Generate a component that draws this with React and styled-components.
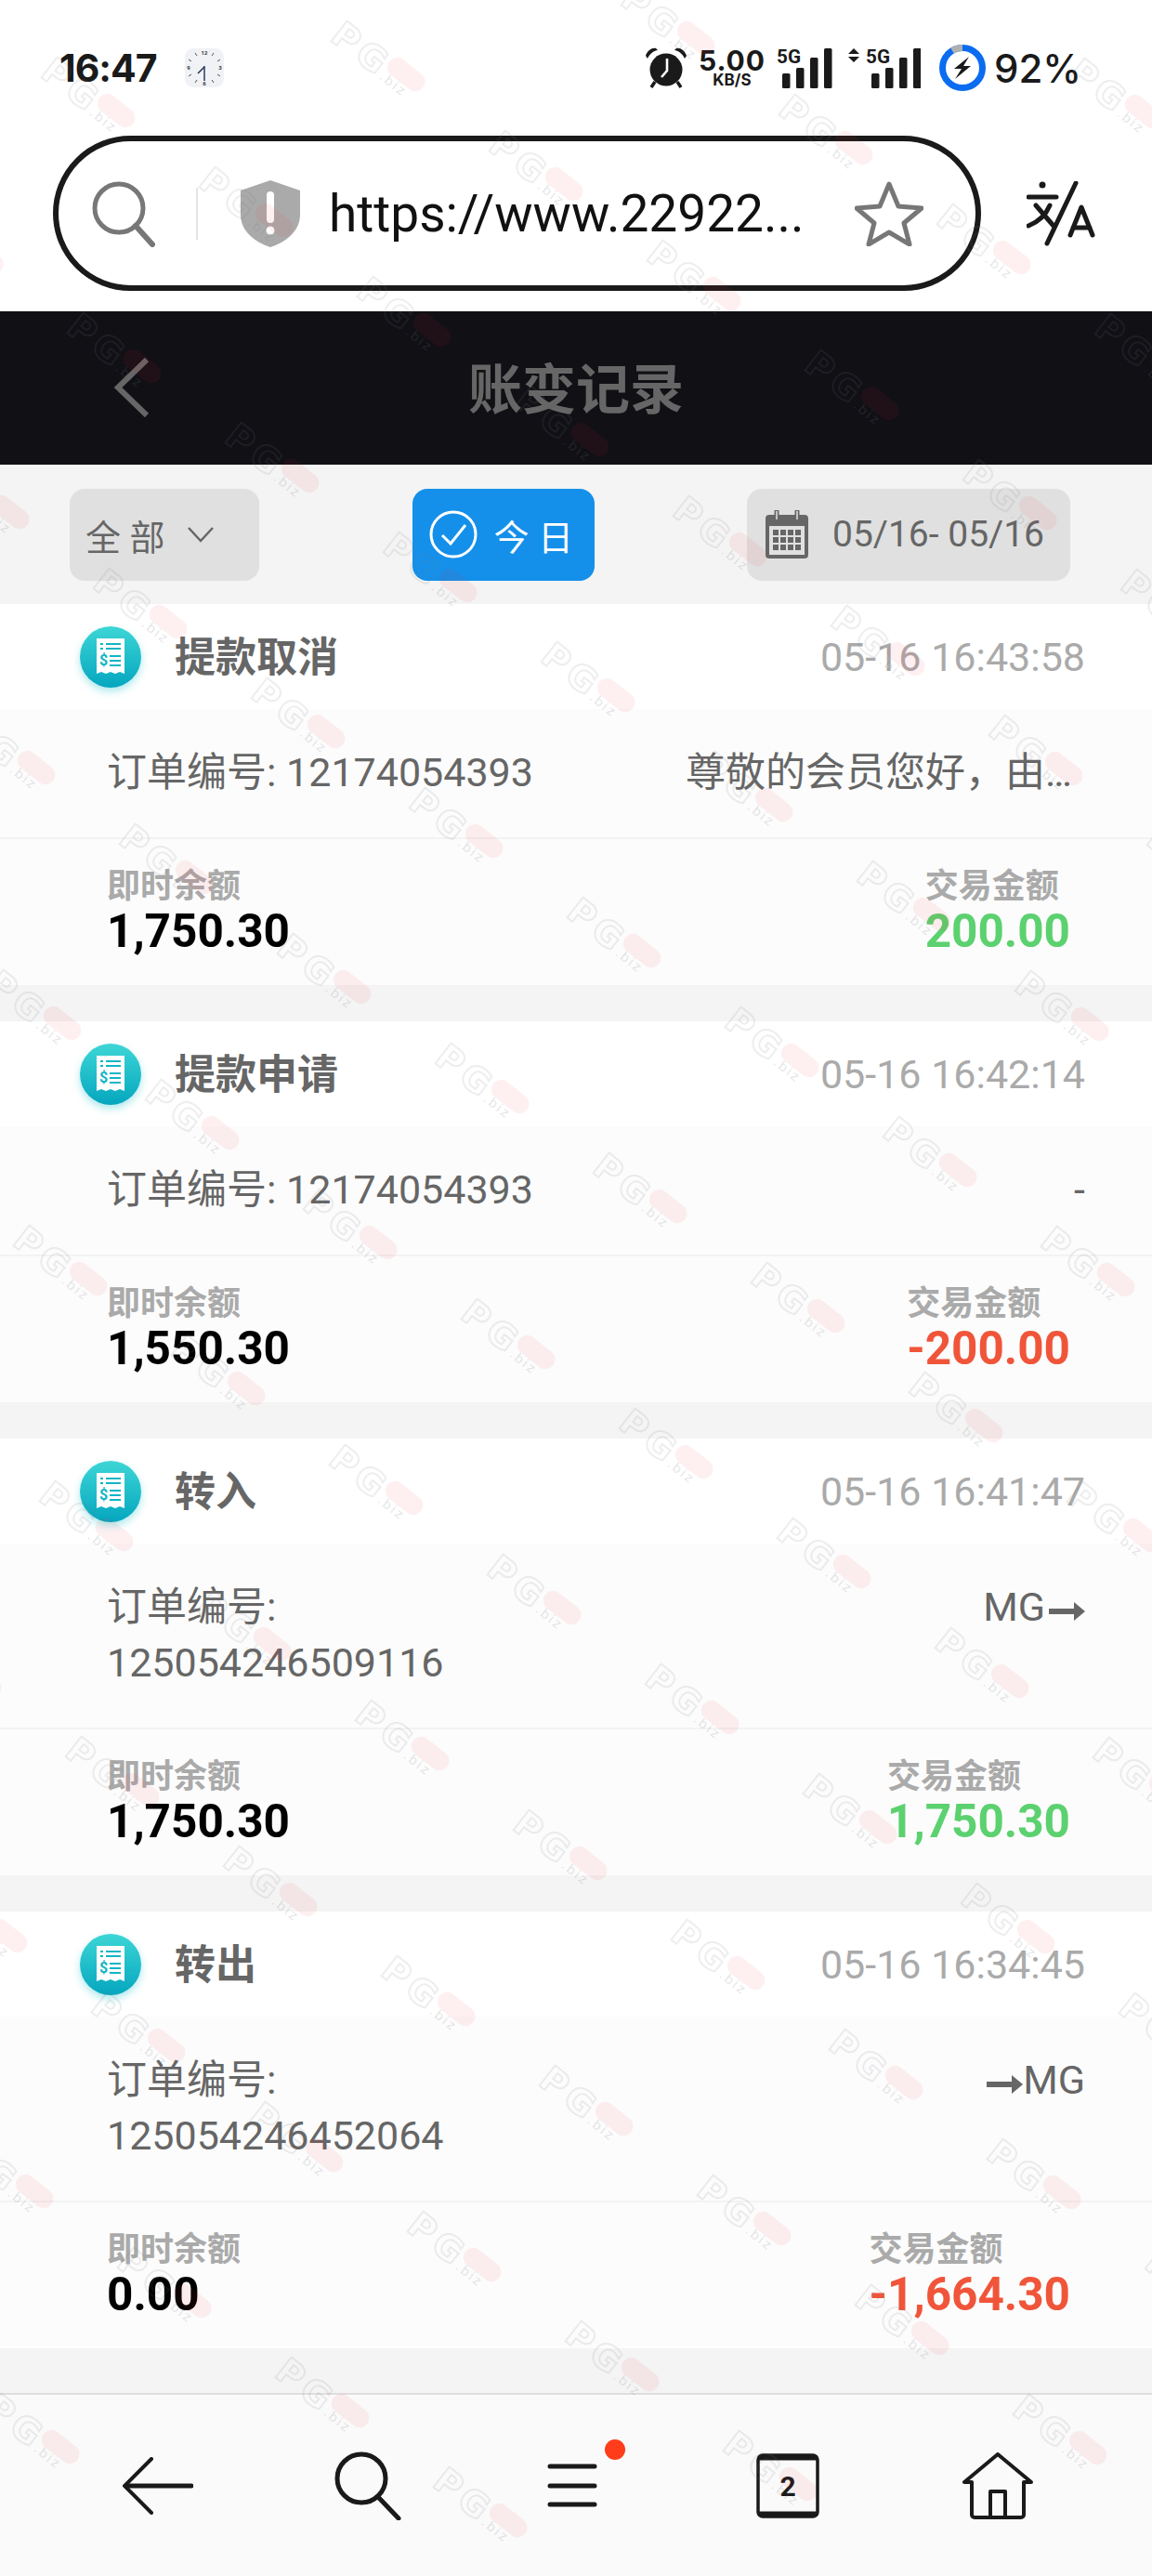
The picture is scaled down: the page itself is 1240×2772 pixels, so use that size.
import React from 'react';
import styled, { createGlobalStyle } from 'styled-components';

const GlobalStyle = createGlobalStyle`
  html, body { margin: 0; padding: 0; background: #fff; }
  * { box-sizing: border-box; }
  body { font-family: Roboto, "Noto Sans CJK SC", sans-serif; }
`;

const Page = styled.div`
  position: relative;
  width: 1240px;
  height: 2772px;
  overflow: hidden;
  display: flex;
  flex-direction: column;
  background: #f4f4f4;
`;

/* status bar */
const StatusBar = styled.div`
  height: 146px;
  background: #fff;
  padding: 0 76px 0 64px;
  display: flex;
  align-items: center;
  color: #1a1a1a;
  font-family: Inter, Roboto, sans-serif;
`;
const Time = styled.div`
  font-size: 41px;
  font-weight: 700;
  letter-spacing: -1px;
  width: 135px;
`;
const StatusRight = styled.div`
  margin-left: auto;
  display: flex;
  align-items: center;
`;
const Speed = styled.div`
  width: 76px;
  margin: 0 10px;
  display: flex;
  flex-direction: column;
  align-items: center;
`;
const SpeedValue = styled.span`
  font-size: 30px;
  font-weight: 700;
  letter-spacing: 1px;
  line-height: 27px;
`;
const SpeedUnit = styled.span`
  font-size: 17px;
  font-weight: 700;
  line-height: 15px;
`;
const SignalSlot = styled.div`
  margin-left: ${(p) => p.$ml}px;
  line-height: 0;
`;
const Battery = styled.div`
  font-size: 42px;
  font-weight: 500;
  margin-left: 9px;
`;

/* address bar */
const BrowserBar = styled.div`
  height: 189px;
  background: #fff;
  display: flex;
  align-items: flex-start;
  padding-left: 57px;
`;
const Pill = styled.div`
  width: 999px;
  height: 167px;
  border: 6px solid #1a1a1a;
  border-radius: 84px;
  display: flex;
  align-items: center;
  padding: 0 56px 0 35px;
`;
const Divider = styled.div`
  width: 2px;
  height: 56px;
  background: #e4e4e4;
  margin: 0 46px 0 43px;
`;
const Url = styled.div`
  flex: 1;
  margin-left: 31px;
  font-size: 55px;
  color: #111;
  white-space: nowrap;
`;
const Translate = styled.div`
  margin-left: 49px;
  margin-top: 49px;
  line-height: 0;
`;

/* page header */
const Header = styled.div`
  height: 165px;
  background: #101015;
  display: flex;
  align-items: center;
  justify-content: center;
  position: relative;
`;
const BackLink = styled.div`
  position: absolute;
  left: 122px;
  top: 50px;
  line-height: 0;
`;
const Title = styled.div`
  font-size: 58px;
  font-weight: 700;
  color: #666;
  margin-bottom: 6px;
`;

/* filters */
const Filters = styled.div`
  height: 150px;
  display: flex;
  align-items: center;
  justify-content: space-between;
  padding: 0 88px 0 75px;
  flex: none;
`;
const FilterButton = styled.div`
  height: 99px;
  width: ${(p) => p.$w}px;
  border-radius: 16px;
  display: flex;
  align-items: center;
  background: ${(p) => (p.$active ? '#1490ea' : '#e0e0e0')};
  color: ${(p) => (p.$active ? '#fff' : '#666')};
  padding-left: ${(p) => p.$pl}px;
  white-space: nowrap;
`;
const FilterText = styled.span`
  margin: 0 ${(p) => p.$mr || 0}px 0 ${(p) => p.$ml || 0}px;
  font-size: ${(p) => p.$size || 38}px;
`;

/* records */
const List = styled.div`
  flex: 1;
  overflow: hidden;
`;
const Card = styled.div`
  margin-bottom: 39px;
  background: #fcfcfc;
`;
const CardHead = styled.div`
  height: 113px;
  background: #fff;
  display: flex;
  align-items: center;
  padding: 0 72px 0 86px;
`;
const IconBall = styled.div`
  width: 66px;
  height: 66px;
  border-radius: 50%;
  background: linear-gradient(180deg, #3dd6d6, #05a6bf);
  box-shadow: 0 4px 8px rgba(20, 190, 200, 0.35);
  display: flex;
  align-items: center;
  justify-content: center;
`;
const CardTitle = styled.div`
  margin: 0 0 5px 36px;
  font-size: 44px;
  font-weight: 700;
  color: #666;
`;
const CardTime = styled.div`
  margin-left: auto;
  font-size: 43px;
  color: #aaa;
`;
const InfoRow = styled.div`
  display: flex;
  padding: 38px 72px 40px 115px;
  font-size: 43px;
  line-height: 60px;
  color: #666;
  border-bottom: 2px solid #f3f3f3;
`;
const OrderNo = styled.div`
  width: 500px;
`;
const Note = styled.div`
  margin-left: auto;
  width: 430px;
  text-align: right;
  white-space: nowrap;
  overflow: hidden;
  text-overflow: ellipsis;
`;
const ArrowGap = styled.span`
  margin-left: 4px;
`;
const AmountRow = styled.div`
  height: 157px;
  display: flex;
  justify-content: space-between;
  align-items: center;
  padding: 0 88px 3px 115px;
`;
const AmountCol = styled.div`
  display: flex;
  flex-direction: column;
`;
const AmountLabel = styled.span`
  font-size: 36px;
  font-weight: 700;
  color: #aaa;
  line-height: 44px;
`;
const AmountValue = styled.span`
  font-size: 49.5px;
  font-weight: 700;
  line-height: 52px;
  color: ${(p) => p.$color || '#000'};
`;

/* bottom bar */
const BottomBar = styled.div`
  flex: none;
  height: 197px;
  background: #fafafa;
  border-top: 2px solid #dedede;
  display: grid;
  grid-template-columns: repeat(5, 226px);
  padding-left: 57px;
`;
const BottomItem = styled.div`
  display: flex;
  align-items: center;
  justify-content: center;
`;

/* tiled watermark over the whole page */
const Mark = styled.div`
  position: absolute;
  width: 130px;
  height: 44px;
  transform: rotate(38deg);
  pointer-events: none;
  font-family: "DejaVu Sans", sans-serif;
`;
const MarkPG = styled.span`
  position: absolute;
  left: 0;
  top: 0;
  font-size: 38px;
  line-height: 44px;
  font-weight: 700;
  letter-spacing: 5px;
  color: transparent;
  -webkit-text-stroke: 2px rgba(120, 120, 125, 0.14);
`;
const MarkPill = styled.span`
  position: absolute;
  left: 66px;
  top: 3px;
  width: 46px;
  height: 21px;
  border-radius: 11px;
  background: rgba(240, 40, 50, 0.07);
`;
const MarkBiz = styled.span`
  position: absolute;
  left: 68px;
  top: 22px;
  font-size: 14px;
  letter-spacing: 2px;
  color: rgba(120, 120, 125, 0.2);
`;

const WatermarkLayer = () => {
  const marks = [];
  for (let i = -10; i < 24; i++) {
    for (let j = -10; j < 22; j++) {
      const x = 234 + i * 170 - j * 142;
      const y = 482 + i * 118 + j * 157;
      if (x > -130 && x < 1240 && y > -20 && y < 2700) marks.push([x, y]);
    }
  }
  return marks.map(([x, y]) => (
    <Mark key={`${x}-${y}`} style={{ left: x, top: y }}>
      <MarkPG>PG</MarkPG>
      <MarkPill />
      <MarkBiz>.biz</MarkBiz>
    </Mark>
  ));
};

const ClockIcon = () => (
  <svg width="42" height="42" viewBox="0 0 42 42">
    <rect x="0" y="0" width="42" height="42" rx="9" fill="#f0f2f6" />
    <path d="M11 5l2 3M31 5l-2 3M4 12l3 2M38 12l-3 2M4 30l3-2M38 30l-3-2M11 37l2-3M31 37l-2-3" stroke="#555" strokeWidth="1" />
    <g fontFamily="Roboto, sans-serif" fontSize="6" fontWeight="700" fill="#333" textAnchor="middle">
      <text x="21" y="7">12</text>
      <text x="38" y="23">3</text>
      <text x="21" y="40">6</text>
      <text x="4" y="23">9</text>
    </g>
    <path d="M21 19v16" stroke="#5a6a8a" strokeWidth="2" />
    <path d="M21 20l-7 7" stroke="#2a3a55" strokeWidth="1.6" />
  </svg>
);

const AlarmIcon = () => (
  <svg width="46" height="46" viewBox="0 0 46 46">
    <circle cx="23" cy="25" r="17.5" fill="#1a1a1a" />
    <path d="M1 10C3 4 8 1 12 2L14 4C8 5 5 9 3 13ZM45 10C43 4 38 1 34 2L32 4C38 5 41 9 43 13Z" fill="#1a1a1a" />
    <path d="M11 38l-4 6M35 38l4 6" stroke="#1a1a1a" strokeWidth="3.5" />
    <path d="M24 13v13l-6 7" stroke="#fff" strokeWidth="2.6" fill="none" />
  </svg>
);

const SignalIcon = ({ arrows }) => {
  const w = arrows ? 78 : 60;
  const dx = arrows ? 19 : 0;
  return (
    <svg width={w} height="44" viewBox={`0 0 ${w} 44`}>
      {arrows && <path d="M6 1l6 6H0ZM6 16l6-6H0Z" fill="#1a1a1a" />}
      <text x={dx} y="17" fontFamily="Roboto, sans-serif" fontSize="21" fontWeight="700" fill="#1a1a1a" textLength="26" lengthAdjust="spacingAndGlyphs">5G</text>
      <rect x={dx + 6} y="28" width="8.5" height="16" rx="1.5" fill="#1a1a1a" />
      <rect x={dx + 21} y="22" width="8.5" height="22" rx="1.5" fill="#1a1a1a" />
      <rect x={dx + 36} y="11" width="8.5" height="33" rx="1.5" fill="#1a1a1a" />
      <rect x={dx + 51} y="1" width="8.5" height="43" rx="1.5" fill="#1a1a1a" />
    </svg>
  );
};

const ChargeIcon = () => (
  <svg width="50" height="50" viewBox="0 0 50 50">
    <circle cx="25" cy="25" r="21.5" fill="none" stroke="#0b6cf0" strokeWidth="7" />
    <path d="M25 3.5a21.5 21.5 0 0 0-11 3" fill="none" stroke="#b0b0b0" strokeWidth="7" />
    <path d="M32 13L16 26h8l-7 11 17-14h-8z" fill="#1a1a1a" />
  </svg>
);

const SearchGlass = () => (
  <svg width="70" height="72" viewBox="0 0 70 72" fill="none">
    <circle cx="30" cy="30" r="26" stroke="#777" strokeWidth="5" />
    <path d="M48 49l18 20" stroke="#777" strokeWidth="6" strokeLinecap="round" />
  </svg>
);

const ShieldIcon = () => (
  <svg width="64" height="72" viewBox="0 0 64 72">
    <path d="M32 0l32 11v26c0 17-14 29-32 35C14 66 0 54 0 37V11z" fill="#aaa" />
    <path d="M32 16v26" stroke="#fff" strokeWidth="8" strokeLinecap="round" />
    <circle cx="32" cy="54" r="4.5" fill="#fff" />
  </svg>
);

const StarIcon = () => (
  <svg width="74" height="70" viewBox="0 0 74 70" fill="none">
    <path d="M37 3l10 24 25 2-19 16 6 23-22-13-22 13 6-23L2 29l25-2z" stroke="#777" strokeWidth="5" strokeLinejoin="round" />
  </svg>
);

const TranslateIcon = () => (
  <svg width="74" height="70" viewBox="0 0 74 70" fill="none" stroke="#1a1a1a" strokeWidth="5" strokeLinecap="round" strokeLinejoin="round">
    <circle cx="17" cy="4" r="3.5" fill="#1a1a1a" stroke="none" />
    <path d="M2 17h30M10 26l19 22M25 26C20 38 12 44 2 48" />
    <path d="M53 2L22 67" />
    <path d="M47 58l12-30 12 30M50 50h18" />
  </svg>
);

const ChevronLeft = () => (
  <svg width="40" height="64" viewBox="0 0 40 64" fill="none">
    <path d="M36 2L5 32l31 30" stroke="#666" strokeWidth="6" />
  </svg>
);

const ChevronDown = () => (
  <svg width="30" height="20" viewBox="0 0 30 20" fill="none">
    <path d="M2 3l13 14L28 3" stroke="#666" strokeWidth="2.5" />
  </svg>
);

const CheckCircle = () => (
  <svg width="52" height="52" viewBox="0 0 52 52" fill="none">
    <circle cx="26" cy="26" r="24" stroke="#fff" strokeWidth="3" />
    <path d="M14 27l9 9 16-20" stroke="#fff" strokeWidth="3" />
  </svg>
);

const CalendarIcon = () => (
  <svg width="46" height="52" viewBox="0 0 46 52">
    <path d="M4 5h38a4 4 0 0 1 4 4v39a4 4 0 0 1-4 4H4a4 4 0 0 1-4-4V9a4 4 0 0 1 4-4z" fill="#666" />
    <rect x="4" y="17" width="38" height="31" fill="#e0e0e0" />
    <path d="M12 1v9M34 1v9" stroke="#666" strokeWidth="5" strokeLinecap="round" />
    <path d="M12 1v9M34 1v9" stroke="#e0e0e0" strokeWidth="1.5" />
    {[21, 29, 37].map((y) =>
      [8, 16, 24, 32].map((x) => <rect key={`${x}-${y}`} x={x} y={y} width="6" height="6" fill="#666" />)
    )}
  </svg>
);

const ReceiptIcon = () => (
  <svg width="32" height="42" viewBox="0 0 32 42">
    <path d="M1 1h30v38l-5-2-5 2-5-2-5 2-5-2-5 2z" fill="#fff" />
    <path d="M5 7h3M11 7h16M5 12h3M11 12h16" stroke="#12b5c4" strokeWidth="2" />
    <text x="4" y="30" fontFamily="Roboto, sans-serif" fontSize="16" fontWeight="700" fill="#12b5c4">$</text>
    <path d="M15 20h12M15 25h12M15 30h12" stroke="#12b5c4" strokeWidth="2" />
  </svg>
);

const TransferArrow = () => (
  <svg width="39" height="20" viewBox="0 0 39 20">
    <path d="M0 7h27V0l12 10-12 10v-7H0z" fill="#666" />
  </svg>
);

const NavBack = () => (
  <svg width="76" height="62" viewBox="0 0 76 62" fill="none" stroke="#1a1a1a" strokeLinecap="round">
    <path d="M31 2L2 31l29 29" strokeWidth="4" />
    <path d="M4 31h70" strokeWidth="5" />
  </svg>
);

const NavSearch = () => (
  <svg width="72" height="74" viewBox="0 0 72 74" fill="none" stroke="#1a1a1a" strokeLinecap="round">
    <circle cx="29" cy="29" r="26" strokeWidth="5" />
    <path d="M47 49l22 23" strokeWidth="5" />
  </svg>
);

const NavMenu = () => (
  <svg width="108" height="100" viewBox="0 0 108 100" fill="none" stroke="#1a1a1a" strokeLinecap="round">
    <path d="M24 29h48M24 50h48M24 70h48" strokeWidth="5" />
    <circle cx="94" cy="11" r="11" fill="#ff3d1a" stroke="none" />
  </svg>
);

const NavTabs = () => (
  <svg width="68" height="70" viewBox="0 0 68 70">
    <rect x="2" y="2" width="64" height="66" rx="5" fill="none" stroke="#1a1a1a" strokeWidth="3.5" />
    <path d="M2 5h64" stroke="#1a1a1a" strokeWidth="5" />
    <path d="M2 65h64" stroke="#1a1a1a" strokeWidth="5" />
    <text x="34" y="46" textAnchor="middle" fontFamily="Roboto, sans-serif" fontSize="30" fontWeight="700" fill="#1a1a1a">2</text>
  </svg>
);

const NavHome = () => (
  <svg width="76" height="72" viewBox="0 0 76 72" fill="none" stroke="#1a1a1a" strokeWidth="4" strokeLinejoin="round">
    <path d="M38 2L2 32h8v35a3 3 0 0 0 3 3h50a3 3 0 0 0 3-3V32h8z" />
    <path d="M30 70V42h16v28" />
  </svg>
);

const records = [
  { title: '提款取消', time: '05-16 16:43:58', order: '订单编号: 12174054393', note: '尊敬的会员您好，由于您的提款申请未通过', balance: '1,750.30', amount: '200.00', color: '#5cd16f' },
  { title: '提款申请', time: '05-16 16:42:14', order: '订单编号: 12174054393', note: '-', balance: '1,550.30', amount: '-200.00', color: '#f0553a' },
  { title: '转入', time: '05-16 16:41:47', order: '订单编号: 125054246509116', note: <>MG<ArrowGap><TransferArrow /></ArrowGap></>, balance: '1,750.30', amount: '1,750.30', color: '#5cd16f' },
  { title: '转出', time: '05-16 16:34:45', order: '订单编号: 125054246452064', note: <><TransferArrow />MG</>, balance: '0.00', amount: '-1,664.30', color: '#f0553a' },
];

const App = () => (
  <Page>
    <GlobalStyle />
    <StatusBar>
      <Time>16:47</Time>
      <ClockIcon />
      <StatusRight>
        <AlarmIcon />
        <Speed>
          <SpeedValue>5.00</SpeedValue>
          <SpeedUnit>KB/S</SpeedUnit>
        </Speed>
        <SignalSlot $ml={0}><SignalIcon /></SignalSlot>
        <SignalSlot $ml={17}><SignalIcon arrows /></SignalSlot>
        <SignalSlot $ml={20}><ChargeIcon /></SignalSlot>
        <Battery>92%</Battery>
      </StatusRight>
    </StatusBar>
    <BrowserBar>
      <Pill>
        <SearchGlass />
        <Divider />
        <ShieldIcon />
        <Url>https://www.22922...</Url>
        <StarIcon />
      </Pill>
      <Translate>
        <TranslateIcon />
      </Translate>
    </BrowserBar>
    <Header>
      <BackLink>
        <ChevronLeft />
      </BackLink>
      <Title>账变记录</Title>
    </Header>
    <Filters>
      <FilterButton $w={204} $pl={17}>
        <FilterText $mr={24}>全 部</FilterText>
        <ChevronDown />
      </FilterButton>
      <FilterButton $w={196} $pl={18} $active>
        <CheckCircle />
        <FilterText $ml={18}>今 日</FilterText>
      </FilterButton>
      <FilterButton $w={348} $pl={20}>
        <CalendarIcon />
        <FilterText $ml={26} $size={39}>05/16- 05/16</FilterText>
      </FilterButton>
    </Filters>
    <List>
      {records.map((r) => (
        <Card key={r.time}>
          <CardHead>
            <IconBall>
              <ReceiptIcon />
            </IconBall>
            <CardTitle>{r.title}</CardTitle>
            <CardTime>{r.time}</CardTime>
          </CardHead>
          <InfoRow>
            <OrderNo>{r.order}</OrderNo>
            <Note>{r.note}</Note>
          </InfoRow>
          <AmountRow>
            <AmountCol>
              <AmountLabel>即时余额</AmountLabel>
              <AmountValue>{r.balance}</AmountValue>
            </AmountCol>
            <AmountCol>
              <AmountLabel>交易金额</AmountLabel>
              <AmountValue $color={r.color}>{r.amount}</AmountValue>
            </AmountCol>
          </AmountRow>
        </Card>
      ))}
    </List>
    <BottomBar>
      <BottomItem><NavBack /></BottomItem>
      <BottomItem><NavSearch /></BottomItem>
      <BottomItem><NavMenu /></BottomItem>
      <BottomItem><NavTabs /></BottomItem>
      <BottomItem><NavHome /></BottomItem>
    </BottomBar>
    <WatermarkLayer />
  </Page>
);

export default App;
